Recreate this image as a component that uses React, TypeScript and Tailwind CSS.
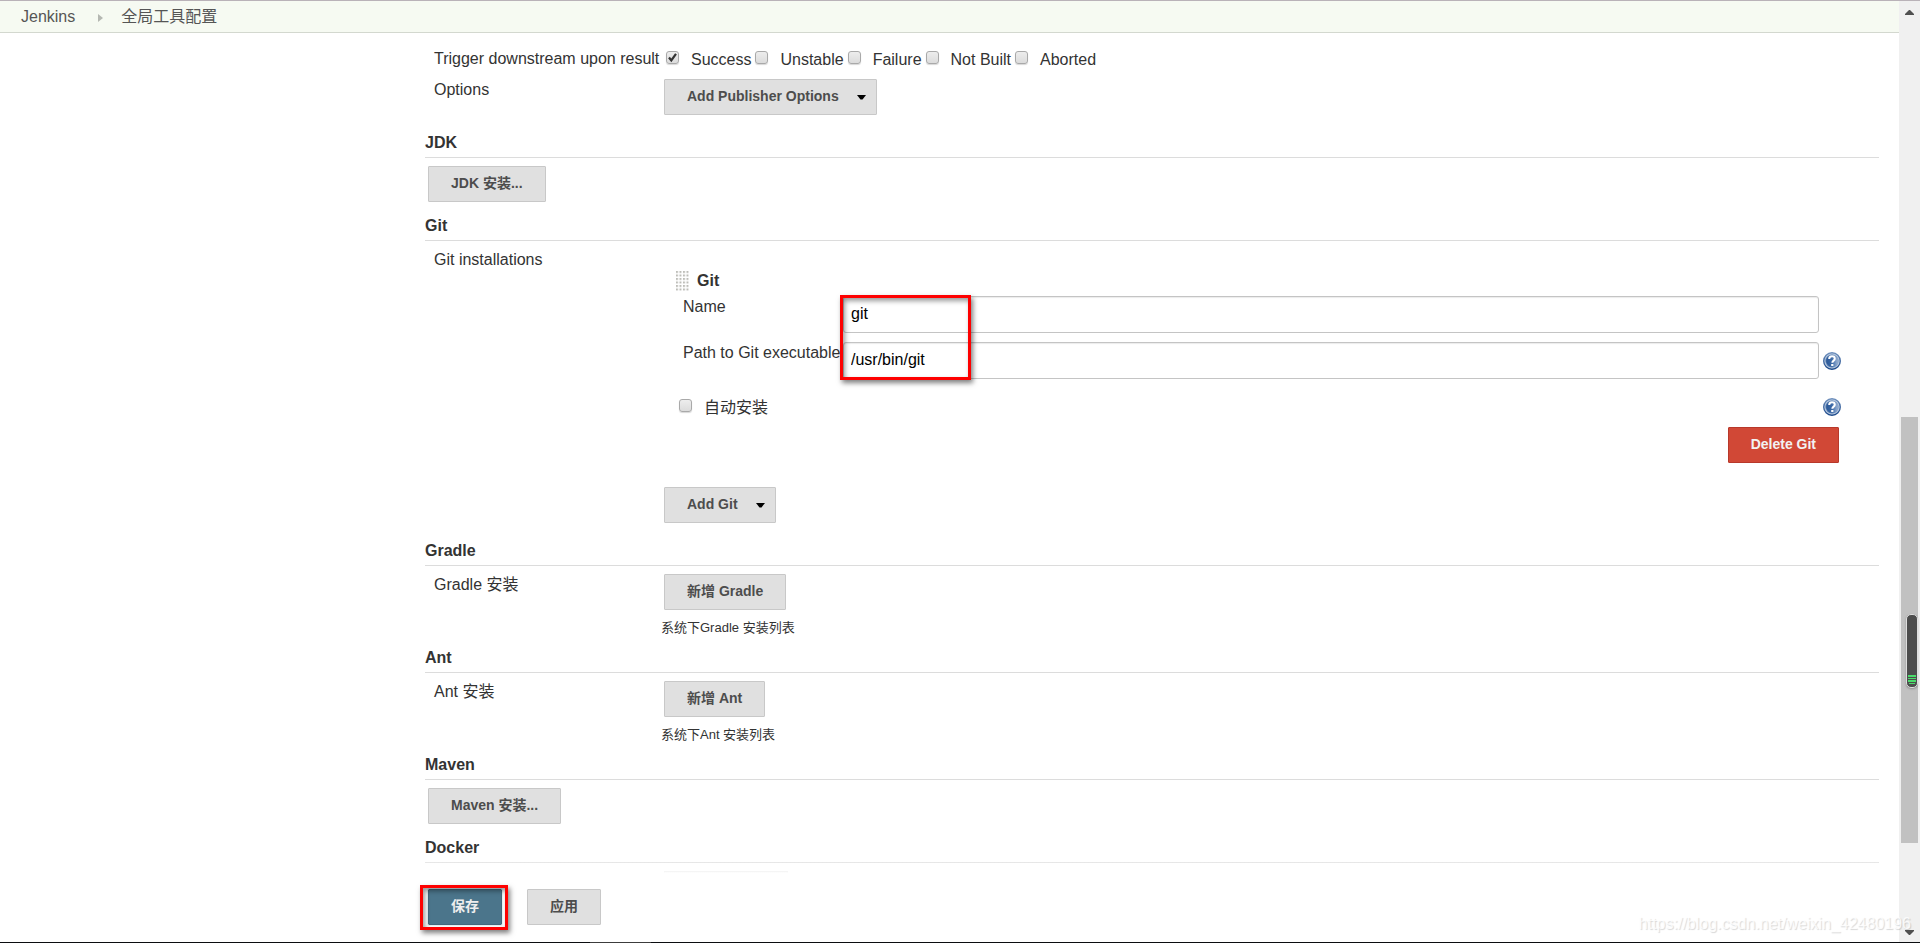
import React from 'react';

function Caret() {
  return (
    <svg width="9" height="5" viewBox="0 0 9 5" className="ml-[18px] shrink-0" aria-hidden="true">
      <path d="M0 0h9L5.5 4.5h-2z" fill="#000" />
    </svg>
  );
}

function Button({ children, menu = false }: { children: React.ReactNode; menu?: boolean }) {
  return (
    <button
      type="button"
      className={`flex h-9 items-center rounded-[1px] border border-[#c8c8c8] bg-[#e0e0e0] pl-[22px] text-sm font-bold text-[#4d4d4d] ${
        menu ? 'pr-[10px]' : 'pr-[22px]'
      }`}
    >
      <span className="pb-[2px] leading-5">{children}</span>
      {menu && <Caret />}
    </button>
  );
}

function Checkbox({ id, checked = false }: { id: string; checked?: boolean }) {
  return (
    <span className="relative block size-[13px] shrink-0">
      <input
        id={id}
        type="checkbox"
        defaultChecked={checked}
        className="peer block size-[13px] appearance-none rounded-[3px] border border-[#a9a9a9] bg-linear-to-b from-[#ededed] to-[#dcdcdc] shadow-[0_1px_1px_#d8d8d8]"
      />
      <svg
        viewBox="0 0 13 13"
        className="pointer-events-none absolute inset-0 hidden size-[13px] peer-checked:block"
        aria-hidden="true"
      >
        <path d="M3 6.5l2.3 3L10 2.8" fill="none" stroke="#333" strokeWidth="2.2" />
      </svg>
    </span>
  );
}

function HelpIcon() {
  return (
    <button type="button" aria-label="Help" className="block size-[18px]">
      <svg viewBox="0 0 18 18" className="size-[18px]">
        <defs>
          <linearGradient id="help-fill" x1="0" y1="0" x2="1" y2="0">
            <stop offset="0" stopColor="#2a5796" />
            <stop offset="0.5" stopColor="#3c69a6" />
            <stop offset="1" stopColor="#a3b9d8" />
          </linearGradient>
          <linearGradient id="help-rim" x1="0" y1="0" x2="0" y2="1">
            <stop offset="0" stopColor="#6f90bd" />
            <stop offset="1" stopColor="#1d4a8b" />
          </linearGradient>
        </defs>
        <circle cx="9" cy="9" r="8.3" fill="#c3d1e4" stroke="url(#help-rim)" strokeWidth="1.4" />
        <circle cx="9" cy="9" r="6.3" fill="url(#help-fill)" stroke="#6f90bd" strokeWidth="0.7" />
        <path
          d="M6.2 6.9c0-1.7 1.3-2.6 2.8-2.6s2.8.9 2.8 2.4c0 2-2.5 1.9-2.5 4.1"
          fill="none"
          stroke="#fff"
          strokeWidth="2"
        />
        <rect x="8.2" y="12" width="2.2" height="2" fill="#fff" />
      </svg>
    </button>
  );
}

function Grip() {
  return (
    <svg width="13" height="20" className="shrink-0" aria-hidden="true">
      <defs>
        <pattern id="grip-dots" width="3.5" height="3.5" patternUnits="userSpaceOnUse">
          <rect width="2" height="2" fill="#bdbdb8" />
        </pattern>
      </defs>
      <rect width="13" height="20" fill="url(#grip-dots)" />
    </svg>
  );
}

function Heading({ children }: { children: React.ReactNode }) {
  return <h2 className="border-b border-[#dcdcdc] pb-[2px] font-bold leading-6">{children}</h2>;
}

function Row({ label, children }: { label: string; children: React.ReactNode }) {
  return (
    <div className="flex items-start">
      <div className="w-[239px] shrink-0 pl-[9px] leading-[22px]">{label}</div>
      <div className="min-w-0 flex-1">{children}</div>
    </div>
  );
}

function Field({ id, label, value, help = false }: { id: string; label: string; value: string; help?: boolean }) {
  return (
    <div className="flex items-start pl-[19px]">
      <label htmlFor={id} className="w-40 shrink-0 leading-[22px]">
        {label}
      </label>
      <input
        id={id}
        type="text"
        defaultValue={value}
        className="h-[37px] min-w-0 flex-1 rounded-[3px] border border-[#c4c4c4] bg-white px-[7px] pb-[2px] text-black shadow-[inset_0_1px_1px_rgba(0,0,0,0.08)]"
      />
      <div className="w-[60px] shrink-0 pl-1 pt-[10px]">{help && <HelpIcon />}</div>
    </div>
  );
}

function Highlight({ className }: { className: string }) {
  return (
    <div
      className={`pointer-events-none absolute border-[3px] border-[#fe0000] shadow-[2px_3px_5px_rgba(0,0,0,0.5),inset_2px_3px_5px_rgba(0,0,0,0.4)] ${className}`}
    />
  );
}

function ScrollBar() {
  return (
    <div className="flex w-[21px] shrink-0 flex-col bg-[#f0f0f0]">
      <div className="flex h-[22px] shrink-0 items-center justify-center">
        <svg width="9" height="5" viewBox="0 0 9 5">
          <path d="M4 0h1l4 4v1H0V4z" fill="#505050" />
        </svg>
      </div>
      <div className="flex-[394]" />
      <div className="relative ml-[2px] mr-[2px] flex-[426] bg-[#c1c1c1]">
        <div className="absolute left-[5px] top-[197px] flex h-[74px] w-3 flex-col justify-end rounded-[5px] border border-[#dedede] bg-[#4d4d4d] px-px pb-[3px] shadow-[0_1px_2px_rgba(0,0,0,0.25)]">
          <svg width="8" height="9" viewBox="0 0 8 9">
            <path d="M0 0h8v2H0zM0 3h8v1H0zM0 5h8v2H0zM1 8h6v1H1z" fill="#4bdc6b" />
          </svg>
        </div>
      </div>
      <div className="flex-[79]" />
      <div className="flex h-5 shrink-0 items-center justify-center">
        <svg width="9" height="5" viewBox="0 0 9 5">
          <path d="M0 0h9v1L5 5H4L0 1z" fill="#505050" />
        </svg>
      </div>
    </div>
  );
}

const results = ['Success', 'Unstable', 'Failure', 'Not Built', 'Aborted'];

export default function App() {
  return (
    <div className="relative flex h-screen flex-col overflow-hidden border-t border-[#b9b2b8] bg-white font-['Liberation_Sans','Noto_Sans_CJK_SC',sans-serif] text-base text-[#333]">
      <div className="flex min-h-0 flex-1">
        <div className="relative flex min-w-0 flex-1 flex-col">
          <nav className="flex h-8 shrink-0 items-center border-b border-[#d3d8cf] bg-[#f6faf2] pl-[21px] text-[#555]">
            <a href="#jenkins" className="leading-6">Jenkins</a>
            <svg width="5" height="8" viewBox="0 0 5 8" className="ml-[23px] mr-[18px] mt-[2px]" aria-hidden="true">
              <path d="M0 0l5 4-5 4z" fill="#b5b8b2" />
            </svg>
            <a href="#tools" className="leading-6">全局工具配置</a>
          </nav>

          <main className="min-h-0 flex-1 overflow-hidden pl-[425px] pr-5 pt-[15px]">
            <section className="pb-4">
              <div className="h-[31px]">
                <Row label="Trigger downstream upon result">
                  <div className="flex gap-1 pl-[2px]">
                    {results.map((name) => (
                      <div key={name} className="flex items-start gap-3">
                        <div className="pt-[3px]">
                          <Checkbox id={name} checked={name === 'Success'} />
                        </div>
                        <label htmlFor={name} className="leading-6">{name}</label>
                      </div>
                    ))}
                  </div>
                </Row>
              </div>
              <Row label="Options">
                <Button menu>Add Publisher Options</Button>
              </Row>
            </section>

            <section className="pb-3">
              <Heading>JDK</Heading>
              <div className="pl-[3px] pt-2">
                <Button>JDK 安装...</Button>
              </div>
            </section>

            <section className="pb-4">
              <Heading>Git</Heading>
              <div className="pt-2">
                <Row label="Git installations">
                  <div className="flex items-center pl-3 pt-5">
                    <Grip />
                    <h3 className="pl-2 font-bold leading-6">Git</h3>
                  </div>
                  <div className="relative mt-[3px] flex flex-col gap-[9px]">
                    <Field id="git-name" label="Name" value="git" />
                    <Field id="git-path" label="Path to Git executable" value="/usr/bin/git" help />
                    <Highlight className="-top-px left-[176px] h-[85px] w-[131px]" />
                  </div>
                  <div className="mt-[9px] flex h-[39px] items-start justify-between pl-[15px] pt-[10px]">
                    <div className="flex items-start gap-3">
                      <div className="pt-px">
                        <Checkbox id="auto-install" />
                      </div>
                      <label htmlFor="auto-install" className="leading-5">自动安装</label>
                    </div>
                    <div className="w-14">
                      <HelpIcon />
                    </div>
                  </div>
                  <div className="flex justify-end pr-10">
                    <button
                      type="button"
                      className="h-9 rounded-[1px] border border-[#b8382a] bg-[#d14836] px-[22px] pb-[2px] text-sm font-bold text-[#f2f2f2]"
                    >
                      Delete Git
                    </button>
                  </div>
                  <div className="pt-6">
                    <Button menu>Add Git</Button>
                  </div>
                </Row>
              </div>
            </section>

            <section className="pb-2">
              <Heading>Gradle</Heading>
              <div className="pt-2">
                <Row label="Gradle 安装">
                  <Button>新增 Gradle</Button>
                  <p className="-ml-[3px] mt-2 text-[13px] leading-5">系统下Gradle 安装列表</p>
                </Row>
              </div>
            </section>

            <section className="pb-2">
              <Heading>Ant</Heading>
              <div className="pt-2">
                <Row label="Ant 安装">
                  <Button>新增 Ant</Button>
                  <p className="-ml-[3px] mt-2 text-[13px] leading-5">系统下Ant 安装列表</p>
                </Row>
              </div>
            </section>

            <section className="pb-3">
              <Heading>Maven</Heading>
              <div className="pl-[3px] pt-2">
                <Button>Maven 安装...</Button>
              </div>
            </section>

            <section>
              <Heading>Docker</Heading>
              <div className="ml-[239px] mt-2 h-9 w-[124px] border border-[#c8c8c8] bg-[#e0e0e0]" />
            </section>
          </main>

          <div className="absolute inset-x-0 bottom-0 flex bg-linear-to-b from-white/0 via-white/85 via-[15px] to-white to-[16px] pb-[17px] pl-[428px] pt-8">
            <div className="relative">
              <button
                type="button"
                className="h-9 rounded-[1px] border border-[#44697d] bg-[#4b758b] px-[22px] pb-[2px] text-sm font-bold text-[#eee] outline outline-[#e4f2f6]"
              >
                保存
              </button>
              <Highlight className="-left-2 -top-1 h-[45px] w-[88px]" />
            </div>
            <div className="pl-[25px]">
              <Button>应用</Button>
            </div>
          </div>
        </div>
        <ScrollBar />
      </div>
      <div className="flex h-px shrink-0 bg-[#0b0d10]">
        <div className="ml-[590px] w-[61px] bg-[#3c3c3c]" />
      </div>
      <div className="pointer-events-none absolute bottom-[7px] right-[9px] text-base leading-6 text-white/80 [text-shadow:1px_1px_1px_rgba(0,0,0,0.16)]">
        https://blog.csdn.net/weixin_42480196
      </div>
    </div>
  );
}
